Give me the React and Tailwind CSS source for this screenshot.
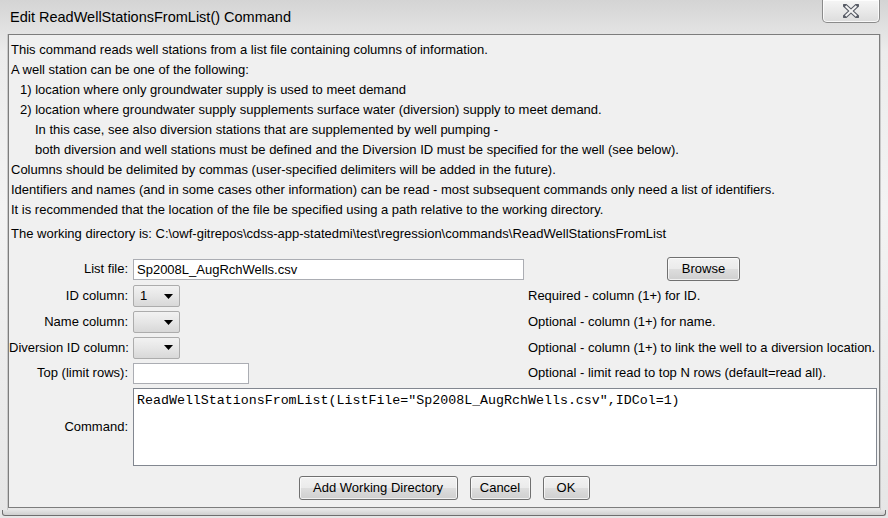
import React from 'react'

const sans = { fontFamily: '"Liberation Sans", Arial, sans-serif' }

const btnClass =
  'flex h-[24px] items-center justify-center rounded-[3px] border border-[#707070] bg-[linear-gradient(180deg,#f2f2f2_0%,#ebebeb_48%,#dddddd_52%,#cfcfcf_100%)] text-[13px] text-black shadow-[inset_0_0_0_1px_rgba(255,255,255,0.7)]'

const inputClass = 'h-[21px] border border-[#abadb3] bg-white px-[3px] text-[13px] leading-[19px] text-black'

const helpLines = [
  { text: 'This command reads well stations from a list file containing columns of information.', indent: 0 },
  { text: 'A well station can be one of the following:', indent: 0 },
  { text: '1) location where only groundwater supply is used to meet demand', indent: 9 },
  { text: '2) location where groundwater supply supplements surface water (diversion) supply to meet demand.', indent: 9 },
  { text: 'In this case, see also diversion stations that are supplemented by well pumping -', indent: 24 },
  { text: 'both diversion and well stations must be defined and the Diversion ID must be specified for the well (see below).', indent: 24 },
  { text: 'Columns should be delimited by commas (user-specified delimiters will be added in the future).', indent: 0 },
  { text: 'Identifiers and names (and in some cases other information) can be read - most subsequent commands only need a list of identifiers.', indent: 0 },
  { text: 'It is recommended that the location of the file be specified using a path relative to the working directory.', indent: 0 },
]

function Combo({ value }) {
  return (
    <div className="flex h-[22px] w-[47px] items-center justify-between rounded-[2px] border border-[#acacac] bg-[linear-gradient(180deg,#f2f2f2_0%,#e6e6e6_50%,#d8d8d8_100%)] pl-[6px] pr-[6px] text-[13px] text-black">
      <span>{value}</span>
      <svg width="9" height="5" viewBox="0 0 9 5">
        <path d="M0 0 H9 L4.5 5 Z" fill="#000" />
      </svg>
    </div>
  )
}

function Row({ label, height, children, hint, right }) {
  return (
    <div className="flex items-center" style={{ height }}>
      <div className="w-[120px] shrink-0 pr-[1px] text-right text-[13px] text-black whitespace-nowrap">{label}</div>
      <div className="w-[399px] shrink-0 pl-[4px]">{children}</div>
      {right}
      {hint ? <div className="text-[13px] text-black whitespace-nowrap">{hint}</div> : null}
    </div>
  )
}

export default function App() {
  return (
    <div
      className="relative h-[518px] w-[888px] overflow-hidden bg-[linear-gradient(180deg,#d4d4d4_0%,#ececec_10%,#f3f3f3_40%,#e6e6e6_100%)]"
      style={sans}
    >
      {/* title bar */}
      <div className="flex h-[34px] items-start justify-between">
        <div className="pl-[10px] pt-[8px] text-[14.5px] leading-[18px] text-black">
          Edit ReadWellStationsFromList() Command
        </div>
        <div className="mr-[8px] flex h-[23px] w-[58px] items-center justify-center rounded-b-[5px] border border-t-0 border-[#8b8b8b] bg-[linear-gradient(180deg,#f6f6f6_0%,#e9e9e9_50%,#dcdcdc_100%)] shadow-[inset_0_0_0_1px_rgba(255,255,255,0.8)]">
          <svg width="16" height="14" viewBox="0 0 16 14">
            <path d="M2 1.5 L14 12.5 M14 1.5 L2 12.5" stroke="#585c66" strokeWidth="4.2" strokeLinecap="square" />
            <path d="M2.6 2 L13.4 12 M13.4 2 L2.6 12" stroke="#f4f4f4" strokeWidth="2" strokeLinecap="butt" />
          </svg>
        </div>
      </div>

      {/* frame + content */}
      <div className="mx-[7px] h-[476px] border-x-[1px] border-[#c9c9c9] bg-transparent">
        <div className="h-[474px] border border-[#7d7d7d] bg-[#f0f0f0]">
          <div className="pl-[2px] pt-[5px] text-[13px] text-black">
            {helpLines.map((l, i) => (
              <div key={i} className="h-[20px] leading-[20px] whitespace-nowrap" style={{ paddingLeft: l.indent }}>
                {l.text}
              </div>
            ))}
            <div className="mt-[4px] h-[20px] leading-[20px] whitespace-nowrap">
              The working directory is: C:\owf-gitrepos\cdss-app-statedmi\test\regression\commands\ReadWellStationsFromList
            </div>
          </div>

          <div className="mt-[11px]">
            <Row
              label="List file:"
              height={28}
              right={
                <div className="flex w-[352px] shrink-0 items-center pl-[139px]">
                  <div className={`${btnClass} w-[73px]`}>Browse</div>
                </div>
              }
            >
              <div className={`${inputClass} w-[391px]`}>Sp2008L_AugRchWells.csv</div>
            </Row>
            <Row label="ID column:" height={26} hint="Required - column (1+) for ID.">
              <Combo value="1" />
            </Row>
            <Row label="Name column:" height={26} hint="Optional - column (1+) for name.">
              <Combo value="" />
            </Row>
            <Row label="Diversion ID column:" height={25} hint="Optional - column (1+) to link the well to a diversion location.">
              <Combo value="" />
            </Row>
            <Row label="Top (limit rows):" height={26} hint="Optional - limit read to top N rows (default=read all).">
              <div className={`${inputClass} w-[116px]`}></div>
            </Row>

            <div className="mt-[2px] flex items-center">
              <div className="w-[120px] shrink-0 pr-[1px] text-right text-[13px] text-black">Command:</div>
              <div className="ml-[4px] h-[78px] w-[744px] border border-[#828790] bg-white px-[3px] pt-[2px]">
                <div
                  className="text-[13.3px] leading-[20px] text-black whitespace-nowrap"
                  style={{ fontFamily: '"Liberation Mono", "Courier New", monospace' }}
                >
                  ReadWellStationsFromList(ListFile="Sp2008L_AugRchWells.csv",IDCol=1)
                </div>
              </div>
            </div>

            <div className="mt-[10px] flex justify-center gap-[12px]">
              <div className={`${btnClass} w-[159px]`}>Add Working Directory</div>
              <div className={`${btnClass} w-[61px]`}>Cancel</div>
              <div className={`${btnClass} w-[47px]`}>OK</div>
            </div>
          </div>
        </div>
      </div>

      {/* bottom frame edge */}
      <div className="mx-[2px] h-[6px] rounded-b-[3px] border-x border-b border-[#6e6e6e] bg-[linear-gradient(180deg,#e4e4e4,#cfcfcf)]" />
    </div>
  )
}
